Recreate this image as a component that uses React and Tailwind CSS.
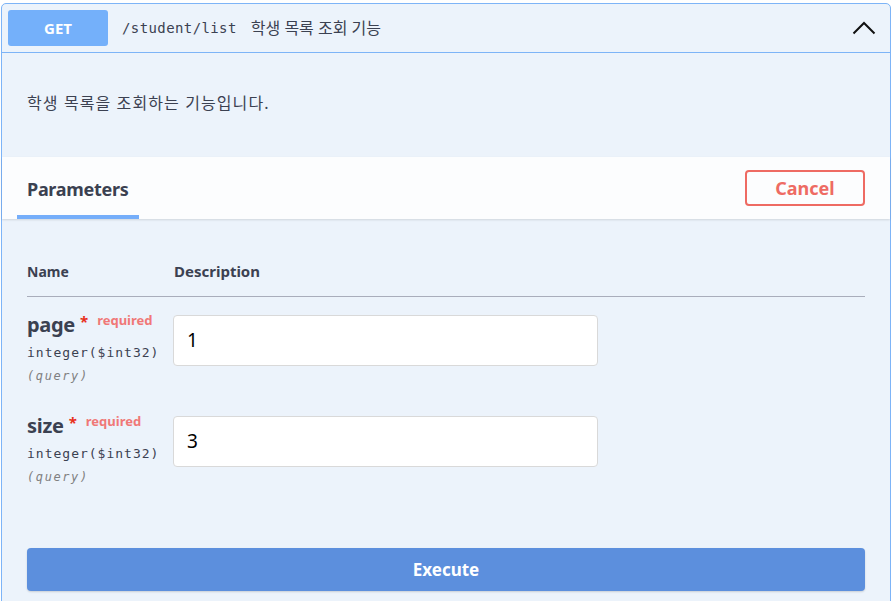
import React from "react";

const sans = "font-['Noto_Sans','Noto_Sans_CJK_KR',sans-serif]";
const mono = "font-['DejaVu_Sans_Mono','Noto_Sans_CJK_KR',monospace]";

const ParamRow = ({ name, value }) => (
    <div className="h-[101px] flex items-start pt-[2px]">
        <div className="w-[146px] shrink-0 -mt-[1px]">
            <div className="flex items-start h-[22px]">
                <span className={`${sans} text-[20px] leading-[22px] font-bold text-[#3b4151] tracking-[-0.3px]`}>{name}</span>
                <span className="ml-[5px] text-[15px] leading-[14px] text-[#e8301c] font-bold">*</span>
                <span className={`${sans} ml-[9px] text-[13px] leading-[12px] font-bold text-[#f07877]`}>required</span>
            </div>
            <div className={`${mono} mt-[9px] text-[13px] leading-[16px] text-[#3b4151] tracking-[1px]`}>integer($int32)</div>
            <div className={`${mono} mt-[8px] text-[12px] leading-[14px] italic text-[#808080] tracking-[1.6px]`}>(query)</div>
        </div>
        <div className="w-[425px] h-[51px] bg-white border border-[#d9d9d9] rounded-[4px] flex items-center px-[13px]">
            <span className={`${sans} text-[19px] text-black`}>{value}</span>
        </div>
    </div>
);

export default function App() {
    return (
        <div className="w-[893px] h-[601px] overflow-hidden bg-white pt-[3px] pl-[1px] pr-[2px]">
            <div className="h-[620px] border border-[#7db4f7] rounded-t-[5px] bg-[#ecf3fb]">

                {/* header */}
                <div className="h-[49px] flex items-center px-[6px] border-b border-[#7db4f7]">
                    <div className={`${sans} w-[100px] h-[36px] rounded-[3px] bg-[#74b0fa] flex items-center justify-center text-white font-bold text-[15px]`}>
                        GET
                    </div>
                    <span className={`${mono} ml-[14px] text-[14px] tracking-[0.4px] text-[#3b4151]`}>/student/list</span>
                    <span className={`${sans} ml-[14px] text-[16px] text-[#3b4151]`}>학생 목록 조회 기능</span>
                    <div className="flex-1" />
                    <svg width="24" height="14" viewBox="0 0 24 14" className="mr-[8px]">
                        <path d="M1.5 12.5 L12 2 L22.5 12.5" fill="none" stroke="#111" strokeWidth="2" />
                    </svg>
                </div>

                {/* description */}
                <div className="h-[104px] px-[25px] pt-[39px]">
                    <p className={`${sans} text-[16px] leading-[22px] tracking-[1.1px] text-[#3b4151]`}>학생 목록을 조회하는 기능입니다.</p>
                </div>

                {/* tab header */}
                <div className="h-[62px] bg-[#fcfdfe] shadow-[0_1px_2px_rgba(0,0,0,0.12)] flex items-stretch pl-[15px] pr-[25px]">
                    <div className="relative px-[10px] pt-[2px] flex items-center w-[122px]">
                        <span className={`${sans} text-[18px] font-bold text-[#3b4151] tracking-[-0.3px]`}>Parameters</span>
                        <div className="absolute left-0 right-0 bottom-0 h-[4px] bg-[#75aefa]" />
                    </div>
                    <div className="flex-1" />
                    <div className="flex items-center">
                        <button className={`${sans} w-[120px] h-[36px] border-2 border-[#ee6b63] rounded-[4px] text-[#ee6b63] font-bold text-[18px] bg-transparent`}>
                            Cancel
                        </button>
                    </div>
                </div>

                {/* parameters table */}
                <div className="px-[25px] pt-[42px]">
                    <div className={`${sans} flex text-[14px] font-bold text-[#3b4151] pb-[14px] border-b border-[#a9adbb]`}>
                        <span className="w-[147px]">Name</span>
                        <span className="text-[15px] leading-[20px]">Description</span>
                    </div>
                    <div className="pt-[16px]">
                        <ParamRow name="page" value="1" />
                        <ParamRow name="size" value="3" />
                    </div>
                    <button className={`${sans} mt-[33px] w-full h-[43px] rounded-[4px] bg-[#5c8fdd] text-white font-bold text-[17px] shadow-[0_1px_2px_rgba(0,0,0,0.15)]`}>
                        Execute
                    </button>
                </div>
            </div>
        </div>
    );
}
